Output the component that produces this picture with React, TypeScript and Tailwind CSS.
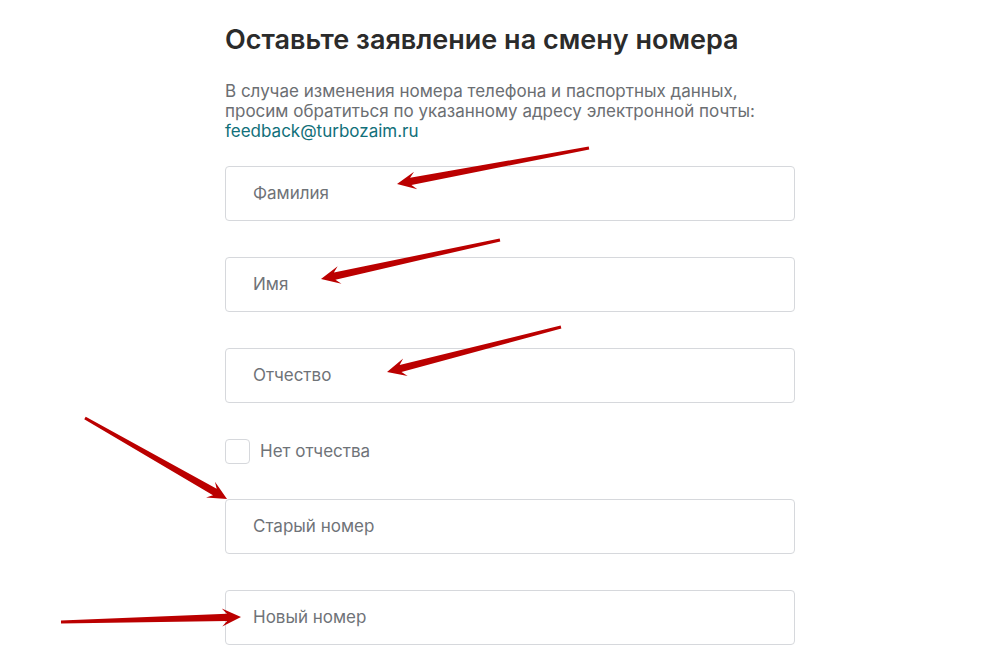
import React from "react"

const fields = ["Фамилия", "Имя", "Отчество"]

type Arrow = { tail: [number, number]; tip: [number, number] }

const arrows: Arrow[] = [
  { tail: [589, 148], tip: [397, 184] },
  { tail: [500, 240], tip: [321, 279] },
  { tail: [561, 327], tip: [387, 372] },
  { tail: [85, 418], tip: [227, 499] },
  { tail: [61, 622], tip: [241, 617] },
]

function arrowPoints({ tail, tip }: Arrow) {
  const dx = tip[0] - tail[0]
  const dy = tip[1] - tail[1]
  const len = Math.hypot(dx, dy)
  const ux = dx / len
  const uy = dy / len
  const nx = -uy
  const ny = ux
  const headLen = 19
  const notch = 14
  const headW = 9
  const shaftTail = 1.5
  const shaftHead = 3.7
  const at = (d: number, w: number) => `${tail[0] + ux * d + nx * w},${tail[1] + uy * d + ny * w}`
  const b = len - headLen
  const n = len - notch
  return [
    at(0, shaftTail),
    at(n, shaftHead),
    at(b, headW),
    at(len, 0),
    at(b, -headW),
    at(n, -shaftHead),
    at(0, -shaftTail),
  ].join(" ")
}

function Field({ label }: { label: string }) {
  return (
    <div className="flex h-[55px] w-[570px] items-center rounded-[4px] border border-[#d6d8dc] bg-white px-[27px] text-[17px] text-[#6f7378]">
      {label}
    </div>
  )
}

export default function App() {
  return (
    <div className="relative h-[662px] w-full overflow-hidden bg-white font-['Inter','Noto_Sans',sans-serif]">
      <div className="ml-[225px] flex w-[570px] flex-col pt-[22px]">
        <h1 className="text-[27px] leading-[36px] font-semibold text-[#2b2b2b]">
          Оставьте заявление на смену номера
        </h1>
        <p className="mt-[23px] text-[17px] leading-[20px] text-[#6b6e72]">
          В случае изменения номера телефона и паспортных данных,
          <br />
          просим обратиться по указанному адресу электронной почты:
          <br />
          <span className="text-[#11707a]">feedback@turbozaim.ru</span>
        </p>
        <div className="mt-[25px] flex flex-col gap-[36px]">
          {fields.map((f) => (
            <Field key={f} label={f} />
          ))}
        </div>
        <label className="mt-[36px] flex h-[25px] items-center gap-[10px]">
          <span className="h-[25px] w-[25px] rounded-[4px] border border-[#d6d8dc] bg-white" />
          <span className="text-[17px] text-[#6f7378]">Нет отчества</span>
        </label>
        <div className="mt-[35px] flex flex-col gap-[36px]">
          <Field label="Старый номер" />
          <Field label="Новый номер" />
        </div>
      </div>
      <svg className="pointer-events-none absolute inset-0" width="991" height="662">
        {arrows.map((a, i) => (
          <polygon key={i} points={arrowPoints(a)} fill="#bb0000" />
        ))}
      </svg>
    </div>
  )
}
